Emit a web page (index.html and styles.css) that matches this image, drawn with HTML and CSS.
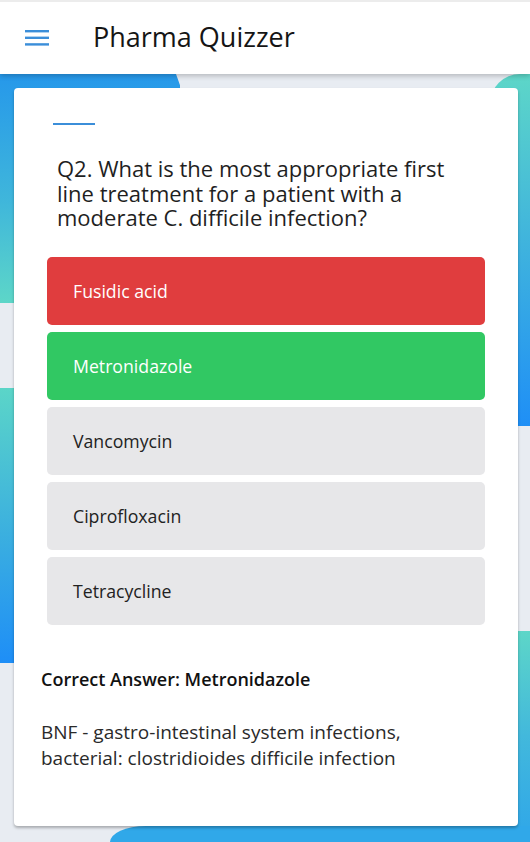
FILE: index.html
```html
<!DOCTYPE html>
<html>
<head>
<meta charset="utf-8">
<link rel="stylesheet" href="styles.css">
</head>
<body>
<div class="bg" aria-hidden="true">
  <div class="blob blob-a"></div>
  <div class="blob blob-b"></div>
  <div class="blob blob-c"></div>
  <div class="blob blob-d"></div>
  <div class="blob blob-e"></div>
</div>
<header class="appbar">
  <button class="menu-btn" aria-label="Menu">
    <svg width="24" height="18" viewBox="0 0 24 18"><rect x="0" y="0" width="24" height="2.4" fill="#3b8ed9"/><rect x="0" y="6.6" width="24" height="2.4" fill="#3b8ed9"/><rect x="0" y="13.2" width="24" height="2.4" fill="#3b8ed9"/></svg>
  </button>
  <h1 class="title">Pharma Quizzer</h1>
</header>
<main class="card">
  <div class="accent"></div>
  <p class="question">Q2. What is the most appropriate first line treatment for a patient with a moderate C. difficile infection?</p>
  <div class="options">
    <div class="option wrong">Fusidic acid</div>
    <div class="option right">Metronidazole</div>
    <div class="option">Vancomycin</div>
    <div class="option">Ciprofloxacin</div>
    <div class="option">Tetracycline</div>
  </div>
  <p class="answer">Correct Answer: Metronidazole</p>
  <p class="ref">BNF - gastro-intestinal system infections, bacterial: clostridioides difficile infection</p>
</main>
</body>
</html>
```
FILE: styles.css
```css
* { box-sizing: border-box; }
html, body { margin: 0; padding: 0; }
body {
  width: 530px;
  height: 842px;
  overflow: hidden;
  position: relative;
  background: #e8ecf2;
  font-family: "Open Sans", "Noto Sans", sans-serif;
  color: #1f1f1f;
}
.bg { position: absolute; inset: 0; z-index: 0; overflow: hidden; }
.blob { position: absolute; }
.blob-a {
  left: 0; top: 74px; width: 180px; height: 229px;
  background: linear-gradient(180deg, #2698ea 0%, #3fb6db 55%, #5dd6c8 100%);
  clip-path: polygon(0 0, 176px 0, 181px 14px, 181px 100%, 0 100%);
}
.blob-b {
  left: 0; top: 388px; width: 40px; height: 275px;
  background: linear-gradient(180deg, #5bd5c8 0%, #3aaee0 55%, #1e8ef7 100%);
}
.blob-c {
  left: 490px; top: 74px; width: 40px; height: 352px;
  border-top-left-radius: 30px;
  background: linear-gradient(180deg, #5dd6c8 0%, #3eb2de 50%, #1f8ff6 100%);
}
.blob-d {
  left: 500px; top: 631px; width: 30px; height: 211px;
  background: linear-gradient(180deg, #5dd6c8 0%, #42b8dc 50%, #2fa6e9 100%);
}
.blob-e {
  left: 110px; top: 826px; width: 420px; height: 16px;
  background: #30a8e9;
  border-top-left-radius: 40px 18px;
}
.appbar {
  position: relative;
  z-index: 2;
  height: 74px;
  background: #fff;
  border-top: 2px solid #ececec;
  display: flex;
  align-items: center;
  padding-left: 25px;
  box-shadow: 0 2px 5px rgba(0,0,0,0.22);
}
.menu-btn {
  border: 0; background: none; padding: 0; margin: 0;
  width: 24px; height: 18px; display: flex;
  margin-top: 1px;
}
.title {
  margin: 0 0 3px 44px;
  font-weight: 400;
  font-size: 27px;
  color: #151515;
}
.card {
  position: relative;
  z-index: 1;
  margin: 14px 12px 0 14px;
  height: 738px;
  background: #fff;
  border-radius: 4px;
  box-shadow: 0 2px 3px rgba(0,0,0,0.28);
  padding: 35px 33px 0 33px;
}
.accent {
  width: 42px; height: 2px; background: #3b8ed9;
  margin-left: 6px;
}
.question {
  margin: 31px 0 0 10px;
  width: 400px;
  font-size: 22px;
  line-height: 24.5px;
  color: #1f1f1f;
}
.options {
  display: flex;
  flex-direction: column;
  gap: 7px;
  margin-top: 27px;
}
.option {
  height: 68px;
  border-radius: 5px;
  background: #e7e7e9;
  display: flex;
  align-items: center;
  padding-left: 26px;
  font-size: 17.7px;
  color: #222;
}
.option.wrong { background: #e03d3e; color: #fff; }
.option.right { background: #31c863; color: #fff; }
.answer {
  margin: 42px 0 0 -6px;
  font-size: 18px;
  font-weight: 600;
  color: #111;
}
.ref {
  margin: 28px 0 0 -6px;
  width: 420px;
  font-size: 19px;
  line-height: 26px;
  color: #2a2a2a;
}
```
